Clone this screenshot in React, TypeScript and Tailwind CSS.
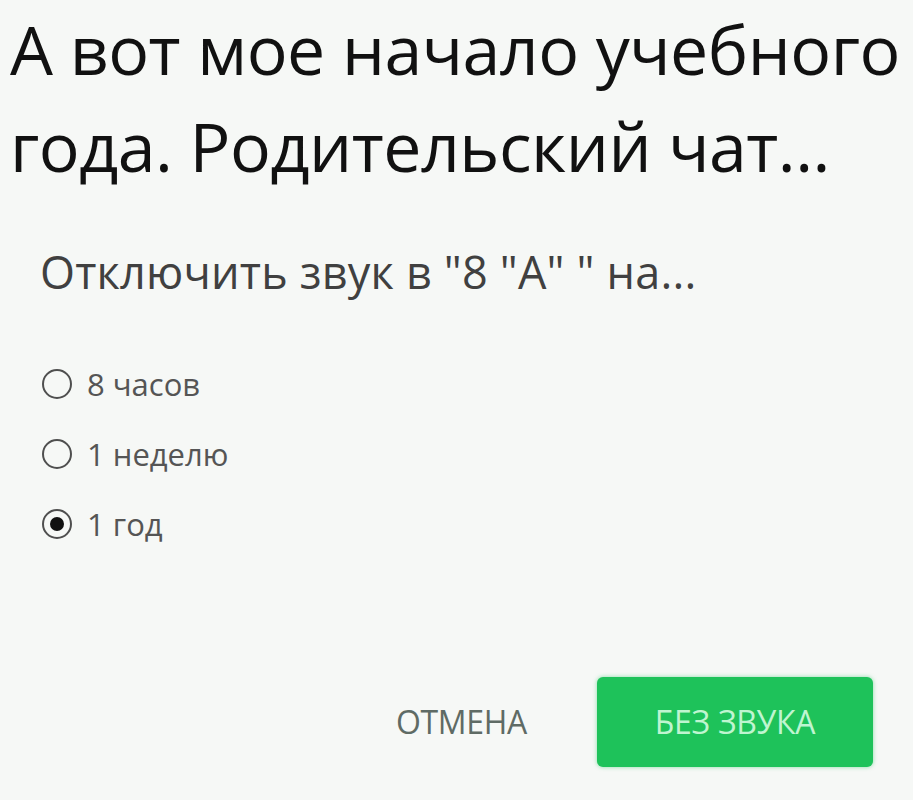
const options = [
  { id: "8h", label: "8 часов" },
  { id: "1w", label: "1 неделю" },
  { id: "1y", label: "1 год" },
];

function Radio({ checked }: { checked: boolean }) {
  return (
    <span className="flex h-[30px] w-[30px] shrink-0 items-center justify-center rounded-full border-[2.5px] border-[#4f4f4f]">
      {checked && <span className="h-[14px] w-[14px] rounded-full bg-[#111]" />}
    </span>
  );
}

export default function App() {
  const selected = "1y";

  return (
    <div
      className="h-[800px] w-[913px] overflow-hidden bg-[#f6f8f6]"
      style={{ fontFamily: '"Open Sans", "Noto Sans", sans-serif' }}
    >
      <h1 className="pl-[10px] text-[68px] leading-[97px] tracking-[-0.5px] text-[#111]">
        А вот мое начало учебного года. Родительский чат...
      </h1>

      <p className="mt-[54px] pl-[40px] text-[45px] leading-[48px] tracking-[0.2px] text-[#404040]">
        Отключить звук в "8 "А" " на...
      </p>

      <ul className="mt-[73px] flex flex-col gap-[40px] pl-[42px]">
        {options.map((o) => (
          <li key={o.id} className="flex h-[30px] items-center gap-[15px]">
            <Radio checked={o.id === selected} />
            <span className="text-[31px] tracking-[0px] text-[#555]">{o.label}</span>
          </li>
        ))}
      </ul>

      <div className="mt-[138px] flex items-center justify-end gap-[70px] pr-[40px]">
        <button className="text-[32px] tracking-[-0.3px] text-[#5f6b65]">ОТМЕНА</button>
        <button className="flex h-[90px] w-[276px] items-center justify-center rounded-[6px] bg-[#1ec25a] text-[32px] tracking-[-0.3px] text-[#bff5d0] shadow-[0_0_4px_rgba(30,194,90,0.5)]">
          БЕЗ ЗВУКА
        </button>
      </div>
    </div>
  );
}
